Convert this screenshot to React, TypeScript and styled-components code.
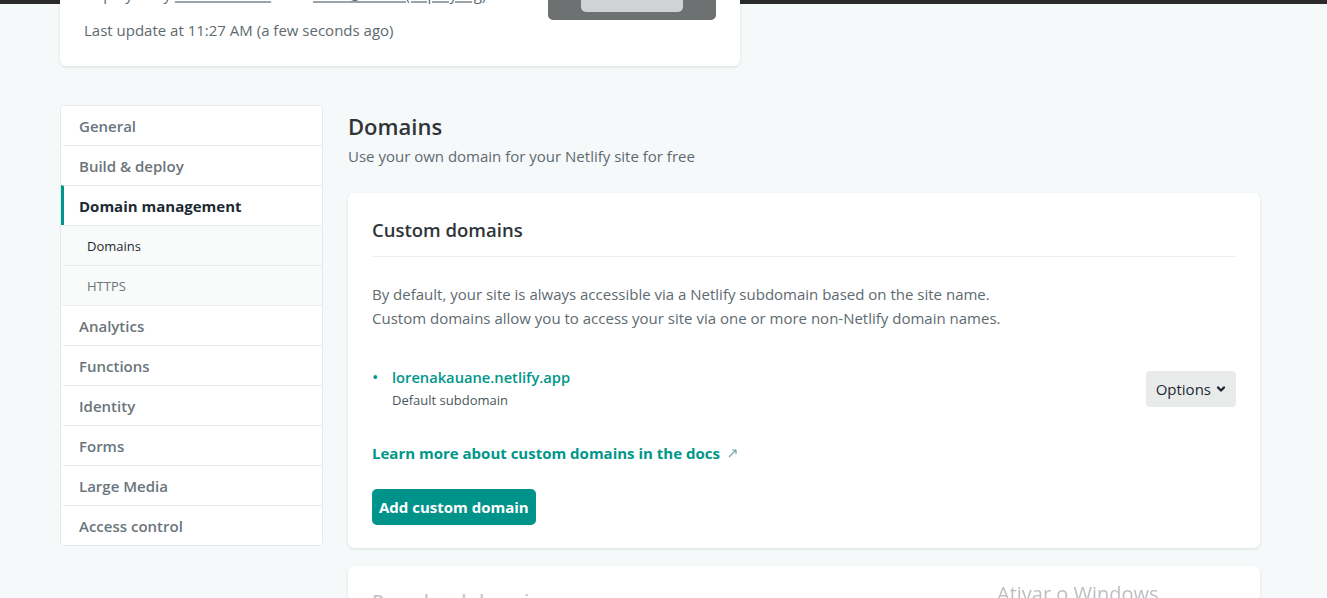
import React from 'react';
import styled, { createGlobalStyle } from 'styled-components';

const GlobalStyle = createGlobalStyle`
  html, body {
    margin: 0;
    padding: 0;
    background: #f6f9fa;
    font-family: 'Open Sans', 'Liberation Sans', sans-serif;
    color: #2e3538;
    overflow: hidden;
  }
  * {
    box-sizing: border-box;
  }
`;

const teal = '#00968a';

const navItems: { label: string; active?: boolean; sub?: boolean }[] = [
  { label: 'General' },
  { label: 'Build & deploy' },
  { label: 'Domain management', active: true },
  { label: 'Domains', sub: true },
  { label: 'HTTPS', sub: true },
  { label: 'Analytics' },
  { label: 'Functions' },
  { label: 'Identity' },
  { label: 'Forms' },
  { label: 'Large Media' },
  { label: 'Access control' },
];

export default function App() {
  return (
    <>
      <GlobalStyle />
      <WindowStrip />
      <Page>
        <TopCard>
          <DeployInfo>
            <InfoLine>
              Deployed by <Muted>lorenakauane</Muted> from <Muted>main@HEAD (deploy log)</Muted>
            </InfoLine>
            <InfoLine>Last update at 11:27 AM (a few seconds ago)</InfoLine>
          </DeployInfo>
          <Preview>
            <PreviewInner />
          </Preview>
        </TopCard>

        <Layout>
          <Sidebar>
            {navItems.map((item) => (
              <NavItem key={item.label} $active={item.active} $sub={item.sub}>
                {item.label}
              </NavItem>
            ))}
          </Sidebar>

          <Main>
            <PageTitle>Domains</PageTitle>
            <PageSubtitle>Use your own domain for your Netlify site for free</PageSubtitle>

            <Card>
              <CardHeader>Custom domains</CardHeader>
              <CardText>
                By default, your site is always accessible via a Netlify subdomain based on the site name.
                <br />
                Custom domains allow you to access your site via one or more non-Netlify domain names.
              </CardText>

              <DomainRow>
                <DomainInfo>
                  <DomainLink>lorenakauane.netlify.app</DomainLink>
                  <DomainNote>Default subdomain</DomainNote>
                </DomainInfo>
                <OptionsButton>
                  Options
                  <svg width="10" height="10" viewBox="0 0 10 10">
                    <path d="M2 3.5 L5 6.5 L8 3.5" fill="none" stroke="#1d2a33" strokeWidth="2.4" strokeLinecap="round" strokeLinejoin="round" />
                  </svg>
                </OptionsButton>
              </DomainRow>

              <DocsLink>
                Learn more about custom domains in the docs
                <svg width="11" height="11" viewBox="0 0 11 11">
                  <path d="M2 9 L9 2 M5 2 H9 V6" fill="none" stroke="#6fa9a4" strokeWidth="1.2" />
                </svg>
              </DocsLink>

              <PrimaryButton>Add custom domain</PrimaryButton>
            </Card>

            <Card>
              <FadedHeader>Branch subdomains</FadedHeader>
            </Card>
          </Main>
        </Layout>
      </Page>
      <Watermark>Ativar o Windows</Watermark>
    </>
  );
}

const WindowStrip = styled.div`
  height: 4px;
  background: #2b2b2b;
`;

const Page = styled.div`
  padding-left: 60px;
  width: 1260px;
`;

const TopCard = styled.section`
  width: 680px;
  margin-top: -40px;
  background: #fff;
  border-radius: 6px;
  box-shadow: 0 1px 3px rgba(14, 30, 37, 0.12);
  padding: 0 24px 24px;
  display: flex;
  justify-content: space-between;
  align-items: flex-start;
`;

const DeployInfo = styled.div`
  display: flex;
  flex-direction: column;
  padding-top: 18px;
  gap: 12px;
`;

const InfoLine = styled.div`
  font-size: 15px;
  line-height: 24px;
  color: #5e6a70;
`;

const Muted = styled.span`
  text-decoration: underline;
  text-decoration-color: #9aa3a7;
  text-decoration-thickness: 2px;
`;

const Preview = styled.div`
  width: 168px;
  height: 56px;
  background: #6d7172;
  border-radius: 0 0 5px 5px;
  display: flex;
  justify-content: center;
  align-items: flex-end;
  padding-bottom: 8px;
`;

const PreviewInner = styled.div`
  width: 102px;
  height: 30px;
  background: #cfd3d4;
  border-radius: 0 0 5px 5px;
`;

const Layout = styled.div`
  display: grid;
  grid-template-columns: 263px 1fr;
  gap: 25px;
  margin-top: 39px;
`;

const Sidebar = styled.nav`
  align-self: start;
  background: #fff;
  border: 1px solid #e6e9ea;
  border-radius: 4px;
  overflow: hidden;
`;

const NavItem = styled.div<{ $active?: boolean; $sub?: boolean }>`
  height: 40px;
  display: flex;
  align-items: center;
  padding-left: ${({ $sub }) => ($sub ? '23px' : '15px')};
  border-top: 1px solid #e9ebec;
  border-left: 3px solid ${({ $active }) => ($active ? teal : 'transparent')};
  background: ${({ $sub }) => ($sub ? '#f9fafa' : '#fff')};
  font-size: ${({ $sub }) => ($sub ? '13px' : '15px')};
  font-weight: ${({ $active, $sub }) => ($active ? 700 : $sub ? 500 : 600)};
  color: ${({ $active, $sub }) => ($active || $sub ? '#1d2a33' : '#6b757b')};

  &:first-child {
    border-top: none;
    height: 39px;
  }

  &:nth-child(5) {
    color: #6b757b;
  }
`;

const Main = styled.main`
  display: flex;
  flex-direction: column;
  width: 912px;
`;

const PageTitle = styled.h2`
  margin: 6px 0 0;
  font-size: 22px;
  line-height: 30px;
  font-weight: 600;
  color: #2e3538;
`;

const PageSubtitle = styled.p`
  margin: 5px 0 0;
  font-size: 15px;
  line-height: 20px;
  color: #5e6a70;
`;

const Card = styled.section`
  margin-top: 27px;
  background: #fff;
  border-radius: 6px;
  box-shadow: 0 1px 3px rgba(14, 30, 37, 0.12);
  padding: 24px 24px 23px;
  display: flex;
  flex-direction: column;
  align-items: flex-start;

  & + & {
    margin-top: 18px;
  }
`;

const CardHeader = styled.h3`
  align-self: stretch;
  margin: 0;
  padding-bottom: 13px;
  border-bottom: 1px solid #eceeef;
  font-size: 18.5px;
  line-height: 26px;
  font-weight: 600;
  color: #2e3538;
`;

const FadedHeader = styled(CardHeader)`
  color: #c4c8ca;
  border-bottom: none;
  margin-top: -2px;
`;

const CardText = styled.p`
  margin: 25px 0 0;
  font-size: 15px;
  line-height: 24px;
  color: #5e6a70;
`;

const DomainRow = styled.div`
  align-self: stretch;
  margin-top: 36px;
  display: flex;
  align-items: center;
  justify-content: space-between;
`;

const DomainInfo = styled.div`
  display: flex;
  flex-direction: column;
  padding-left: 20px;
  position: relative;

  &::before {
    content: '•';
    position: absolute;
    left: 0;
    top: 0;
    line-height: 22px;
    color: ${teal};
    font-size: 17px;
  }
`;

const DomainLink = styled.a`
  font-size: 14.7px;
  line-height: 22px;
  font-weight: 600;
  color: ${teal};
`;

const DomainNote = styled.span`
  font-size: 13px;
  line-height: 24px;
  color: #4c575c;
`;

const OptionsButton = styled.button`
  height: 36px;
  padding: 0 10px;
  border: none;
  border-radius: 4px;
  background: #e9ebeb;
  display: flex;
  align-items: center;
  gap: 5px;
  font-family: inherit;
  font-size: 15px;
  font-weight: 500;
  color: #1d2a33;
`;

const DocsLink = styled.a`
  margin-top: 30px;
  display: flex;
  align-items: center;
  gap: 7px;
  font-size: 15px;
  line-height: 22px;
  font-weight: 700;
  color: ${teal};
`;

const PrimaryButton = styled.button`
  margin-top: 25px;
  height: 36px;
  padding: 0 7px;
  border: none;
  border-radius: 5px;
  background: #00938a;
  font-family: inherit;
  font-size: 15px;
  font-weight: 700;
  color: #fff;
`;

const Watermark = styled.div`
  position: fixed;
  left: 997px;
  top: 580px;
  font-size: 20px;
  color: rgba(160, 164, 166, 0.7);
  font-family: 'Open Sans', sans-serif;
  pointer-events: none;
`;
